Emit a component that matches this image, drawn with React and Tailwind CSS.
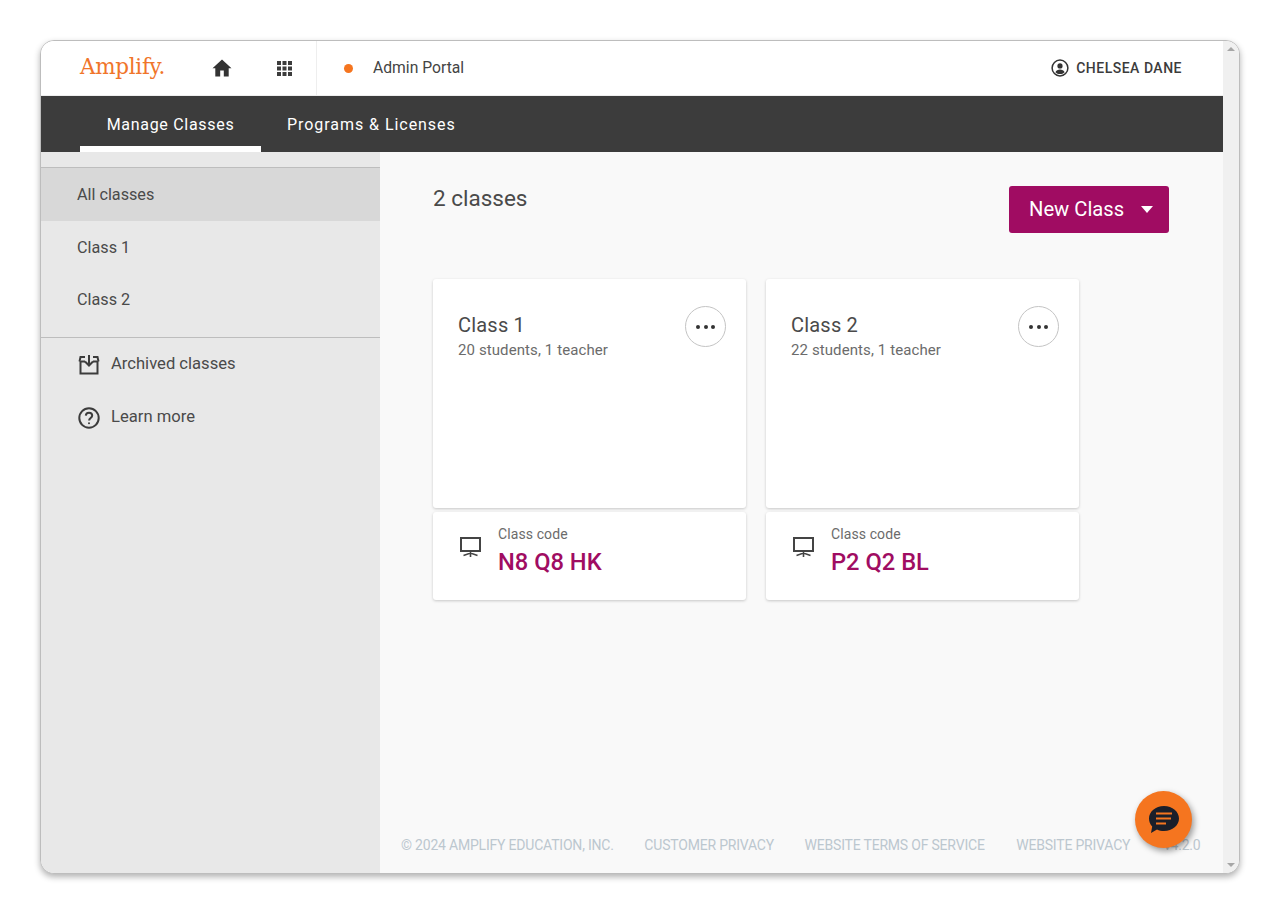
import React from 'react';

const classes = [
  { name: 'Class 1', meta: '20 students, 1 teacher', code: 'N8 Q8 HK' },
  { name: 'Class 2', meta: '22 students, 1 teacher', code: 'P2 Q2 BL' },
];

const GridIcon = () => (
  <svg width="15" height="15" viewBox="0 0 15 15" fill="#3c3c3c">
    {[0, 5.5, 11].map((y) => [0, 5.5, 11].map((x) => <rect key={`${x}-${y}`} x={x} y={y} width="4" height="4" />))}
  </svg>
);

const HomeIcon = () => (
  <svg width="20" height="18" viewBox="0 0 20 18" fill="#333">
    <path d="M10 0.5 0.5 9.2h2.8V17.5h4.9v-6h3.6v6h4.9V9.2h2.8z" />
  </svg>
);

const UserIcon = () => (
  <svg width="18" height="18" viewBox="0 0 18 18" fill="none">
    <circle cx="9" cy="9" r="7.9" stroke="#333" strokeWidth="1.5" />
    <circle cx="9" cy="6.9" r="2.6" fill="#333" />
    <path d="M4.4 13.2c.7-1.8 2.6-2.6 4.6-2.6s3.9.8 4.6 2.6c-1.2 1.2-2.8 1.9-4.6 1.9s-3.4-.7-4.6-1.9z" fill="#333" />
  </svg>
);

const ArchiveIcon = () => (
  <svg width="22" height="21" viewBox="0 0 22 21" fill="none" stroke="#3c3c3c" strokeWidth="2">
    <path d="M7 3H2.500L1.500 7.500M15 3h4.500l1 4.500" />
    <path d="M2.500 7v12.500h17V7" />
    <path d="M11 1v10M7 7.500l4 4 4-4" />
    <path d="M2.500 7.500H7M15 7.500h4.500" />
  </svg>
);

const HelpIcon = () => (
  <svg width="22" height="22" viewBox="0 0 22 22" fill="none" stroke="#3c3c3c" strokeWidth="2">
    <circle cx="11" cy="11" r="9.700" />
    <path d="M7.800 8.600C7.900 6.800 9.300 5.700 11 5.700c1.800 0 3.200 1.100 3.200 2.800 0 2.400-3.100 2.500-3.100 4.900" />
    <circle cx="11" cy="16.200" r="1" fill="#3c3c3c" stroke="none" />
  </svg>
);

const BoardIcon = () => (
  <svg width="21" height="21" viewBox="0 0 21 21" fill="none" stroke="#444" strokeWidth="2">
    <rect x="1" y="1" width="19" height="13" />
    <path d="M10.500 14v6M3.500 18.500l7-2.500 7 2.500" strokeWidth="1.600" />
  </svg>
);

const ChatIcon = () => (
  <svg width="32" height="30" viewBox="0 0 32 30">
    <path d="M16 1C24.500 1 31 6.600 31 13.500S24.500 26 16 26c-2.500 0-5-.5-7-1.500L3 28l1.200-6.500C2 19.300 1 16.500 1 13.500 1 6.600 7.500 1 16 1z" fill="#1b1f2a" />
    <path d="M8 8.500h16M8 13.500h15M8 18.500h10" stroke="#f5751f" strokeWidth="2.200" fill="none" />
  </svg>
);

const SidebarRow = ({ active, children }) => (
  <div className={`flex h-[52.5px] items-center pl-9 pt-[2px] text-[16.2px] text-[#4a4a4a] ${active ? 'bg-[#d8d8d8]' : ''}`}>{children}</div>
);

const ClassCard = ({ item }) => (
  <div className="w-[313px]">
    <div className="relative h-[229px] rounded-[3px] bg-white pl-[25px] pt-[33px] shadow-[0_1px_3px_rgba(0,0,0,0.2)]">
      <div className="text-[20px] leading-[26px] tracking-[0.2px] text-[#4a4a4a]">{item.name}</div>
      <div className="mt-[3px] text-[15px] leading-[18px] tracking-[0.1px] text-[#6b6b6b]">{item.meta}</div>
      <button className="absolute right-[20px] top-[27px] flex h-[41px] w-[41px] items-center justify-center gap-[3.500px] rounded-full border border-[#c4c4c4] bg-white">
        <span className="h-[4px] w-[4px] rounded-full bg-[#333]" />
        <span className="h-[4px] w-[4px] rounded-full bg-[#333]" />
        <span className="h-[4px] w-[4px] rounded-full bg-[#333]" />
      </button>
    </div>
    <div className="mt-[4px] flex h-[88px] rounded-[3px] bg-white pl-[27px] pt-[13px] shadow-[0_1px_3px_rgba(0,0,0,0.2)]">
      <div className="pt-[12px]"><BoardIcon /></div>
      <div className="ml-[17px]">
        <div className="text-[14px] leading-[18px] tracking-[0.1px] text-[#6b6b6b]">Class code</div>
        <div className="mt-[4px] text-[23.700px] font-medium leading-[30px] text-[#a00c62]">{item.code}</div>
      </div>
    </div>
  </div>
);

const App = () => {
  return (
    <div className="h-[915px] w-[1280px] bg-white pl-[40px] pt-[40px] font-['Roboto',sans-serif]">
      <div className="relative flex h-[834px] w-[1200px] overflow-hidden rounded-[14px] border border-[#bdbdbd] bg-white shadow-[0_3px_6px_rgba(0,0,0,0.3)]">
        <div className="flex w-[1182px] shrink-0 flex-col">
          <header className="flex h-[55px] items-center border-b border-[#eeeeee] bg-white">
            <div className="ml-[39px] w-[95px] pb-[2px] font-['DejaVu_Serif',serif] text-[21.500px] tracking-[-0.300px] text-[#f0752a]">Amplify.</div>
            <div className="ml-[37px]"><HomeIcon /></div>
            <div className="ml-[45px]"><GridIcon /></div>
            <div className="ml-[24px] h-full w-px bg-[#eeeeee]" />
            <div className="ml-[27px] h-[9px] w-[9px] rounded-full bg-[#f5751f]" />
            <div className="ml-[20px] text-[15.700px] text-[#444]">Admin Portal</div>
            <div className="ml-auto mr-[41px] flex items-center gap-[7px]">
              <UserIcon />
              <span className="text-[14px] font-medium tracking-[0.500px] text-[#3c3c3c]">CHELSEA DANE</span>
            </div>
          </header>
          <nav className="flex h-[56px] bg-[#3c3c3c] pl-[39px] text-[16px] text-white">
            <div className="flex h-full w-[181px] items-center justify-center border-b-[6px] border-white pt-[8px] tracking-[0.700px]">Manage Classes</div>
            <div className="ml-[26px] flex h-full items-center pt-[1px] tracking-[0.950px]">Programs &amp; Licenses</div>
          </nav>
          <div className="flex min-h-0 flex-1">
            <aside className="w-[339px] bg-[#e8e8e8] pt-[15px]">
              <div className="border-y border-[#bdbdbd] pb-[11px]">
                <SidebarRow active>All classes</SidebarRow>
                <SidebarRow>Class 1</SidebarRow>
                <SidebarRow>Class 2</SidebarRow>
              </div>
              <div className="flex h-[53px] items-center gap-[11px] pl-[37px] pt-[1px] text-[16.600px] text-[#4a4a4a]"><ArchiveIcon />Archived classes</div>
              <div className="flex h-[53px] items-center gap-[11px] pl-[37px] pt-[1px] text-[16.600px] text-[#4a4a4a]"><HelpIcon />Learn more</div>
            </aside>
            <main className="flex flex-1 flex-col bg-[#f9f9f9] pl-[53px] pt-[34px]">
              <div className="flex h-[47px] justify-between pr-[54px]">
                <div className="text-[22.500px] leading-[24px] text-[#4a4a4a]">2 classes</div>
                <button className="flex h-[47px] w-[160px] items-center rounded-[3px] bg-[#a00c62] pl-[20px] text-[20.200px] text-white">
                  New Class
                  <span className="ml-[17px] h-0 w-0 border-x-[6px] border-t-[7px] border-x-transparent border-t-white" />
                </button>
              </div>
              <div className="mt-[46px] flex gap-[20px]">
                {classes.map((item) => <ClassCard key={item.name} item={item} />)}
              </div>
              <footer className="-ml-[32px] mt-auto flex gap-[30.600px] pb-[17px] text-[14px] tracking-[-0.200px] text-[#bcc7cf]">
                <span>© 2024 AMPLIFY EDUCATION, INC.</span>
                <span>CUSTOMER PRIVACY</span>
                <span>WEBSITE TERMS OF SERVICE</span>
                <span className="ml-[1px]">WEBSITE PRIVACY</span>
                <span className="ml-[3px]">v4.2.0</span>
              </footer>
            </main>
          </div>
        </div>
        <div className="flex w-[16px] shrink-0 flex-col items-center justify-between bg-[#f0f0f0] py-[6px]">
          <span className="h-0 w-0 border-x-[4px] border-b-[4px] border-x-transparent border-b-[#a6a6a6]" />
          <span className="h-0 w-0 border-x-[4px] border-t-[4px] border-x-transparent border-t-[#a6a6a6]" />
        </div>
        <button className="absolute left-[1094px] top-[750px] flex h-[57px] w-[57px] items-center justify-center rounded-full bg-[#f5751f] shadow-[2px_3px_6px_rgba(0,0,0,0.4)]">
          <ChatIcon />
        </button>
      </div>
    </div>
  );
};

export default App;
